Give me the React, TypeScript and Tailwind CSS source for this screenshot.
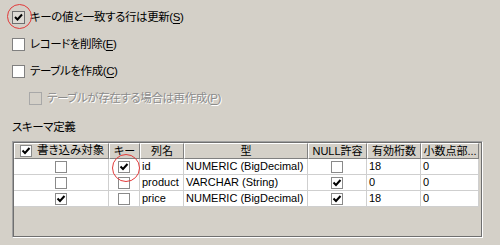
import React from "react";

const font = "font-['Liberation_Sans','Noto_Sans_CJK_JP',sans-serif] [font-feature-settings:'palt'] text-[11.5px] leading-none";

function Box({ checked, disabled, pressed }: { checked?: boolean; disabled?: boolean; pressed?: boolean }) {
  return (
    <div
      className={
        "w-[13px] h-[13px] shrink-0 border flex items-center justify-center " +
        (disabled ? "border-[#a8a8a8] bg-[#d4d0c8]" : pressed ? "border-[#6e6e6e] bg-[#dedbd5]" : "border-[#808080] bg-white")
      }
    >
      {checked && <svg width="11" height="11" viewBox="0 0 11 11"><polyline points="2,5 4.5,7.5 9,2.5" fill="none" stroke="#000" strokeWidth="2" /></svg>}
    </div>
  );
}

function CellBox({ checked }: { checked?: boolean }) {
  return (
    <div className="w-[12px] h-[12px] shrink-0 border border-[#8a8a8a] bg-white flex items-center justify-center">
      {checked && <svg width="10" height="10" viewBox="0 0 10 10"><polyline points="1.5,4.5 4,7 8.5,2" fill="none" stroke="#000" strokeWidth="2" /></svg>}
    </div>
  );
}

function Option({ label, mn, checked, disabled, pressed, indent }: { label: string; mn: string; checked?: boolean; disabled?: boolean; pressed?: boolean; indent?: boolean }) {
  return (
    <div className={"h-[27px] flex items-center " + (indent ? "pl-[29px]" : "pl-[12px]")}>
      <Box checked={checked} disabled={disabled} pressed={pressed} />
      <span
        className={"ml-[5px] tracking-[-0.4px] " + (disabled ? "text-[#8c8c8c] [text-shadow:1px_1px_0_#ffffff]" : "text-black")}
      >
        {label}(<span className="underline underline-offset-2">{mn}</span>)
      </span>
    </div>
  );
}

const cols = [95, 31, 44, 124, 59, 54, 58];

const rows = [
  { write: false, key: true, name: "id", type: "NUMERIC (BigDecimal)", nul: false, prec: "18", scale: "0" },
  { write: false, key: false, name: "product", type: "VARCHAR (String)", nul: true, prec: "0", scale: "0" },
  { write: true, key: false, name: "price", type: "NUMERIC (BigDecimal)", nul: true, prec: "18", scale: "0" },
];

function Head({ w, children }: { w: number; children: React.ReactNode }) {
  return (
    <div
      style={{ width: w }}
      className="h-[16px] shrink-0 flex items-center justify-center border-t border-l border-t-white border-l-white border-r border-b border-r-[#808080] border-b-[#808080] bg-[#d4d0c8] overflow-hidden whitespace-nowrap"
    >
      {children}
    </div>
  );
}

function Cell({ w, center, children }: { w: number; center?: boolean; children: React.ReactNode }) {
  return (
    <div
      style={{ width: w }}
      className={
        "h-[16px] shrink-0 flex items-center border-r border-b border-[#cfcfcf] overflow-hidden whitespace-nowrap " +
        (center ? "justify-center" : "pl-[2px]")
      }
    >
      {children}
    </div>
  );
}

export default function App() {
  return (
    <div className={"relative w-[500px] h-[245px] bg-[#d4d0c8] overflow-hidden pt-[4px] text-black " + font}>
      <Option label="キーの値と一致する行は更新" mn="S" checked pressed />
      <Option label="レコードを削除" mn="E" />
      <Option label="テーブルを作成" mn="C" />
      <Option label="テーブルが存在する場合は再作成" mn="P" disabled indent />
      <div className="h-[29px] flex items-center pl-[12px] pt-[2px] tracking-[-0.4px]">スキーマ定義</div>

      <div className="ml-[12px] w-[471px] h-[97px] border border-t-[#a0a0a0] border-l-[#a0a0a0] border-r-white border-b-white">
        <div className="w-full h-full border border-[#6f6f6f] bg-[#d4d0c8] flex flex-col text-[11px]">
          <div className="flex">
            <Head w={cols[0]}>
              <div className="flex items-center gap-[5px] w-full pl-[5px]">
                <CellBox checked />
                <span className="text-[11.5px]">書き込み対象</span>
              </div>
            </Head>
            <Head w={cols[1]}>キー</Head>
            <Head w={cols[2]}>列名</Head>
            <Head w={cols[3]}>型</Head>
            <Head w={cols[4]}>NULL許容</Head>
            <Head w={cols[5]}>有効桁数</Head>
            <Head w={cols[6]}>小数点部...</Head>
          </div>
          {rows.map((r) => (
            <div key={r.name} className="flex bg-white w-fit">
              <Cell w={cols[0]} center><CellBox checked={r.write} /></Cell>
              <Cell w={cols[1]} center><CellBox checked={r.key} /></Cell>
              <Cell w={cols[2]}>{r.name}</Cell>
              <Cell w={cols[3]}>{r.type}</Cell>
              <Cell w={cols[4]} center><CellBox checked={r.nul} /></Cell>
              <Cell w={cols[5]}>{r.prec}</Cell>
              <Cell w={cols[6]}>{r.scale}</Cell>
            </div>
          ))}
        </div>
      </div>

      <div className="absolute left-[7px] top-[4px] w-[25px] h-[25px] rounded-full border border-[#e23a3a]" />
      <div className="absolute left-[112px] top-[154px] w-[28px] h-[28px] rounded-full border border-[#e23a3a]" />
    </div>
  );
}
